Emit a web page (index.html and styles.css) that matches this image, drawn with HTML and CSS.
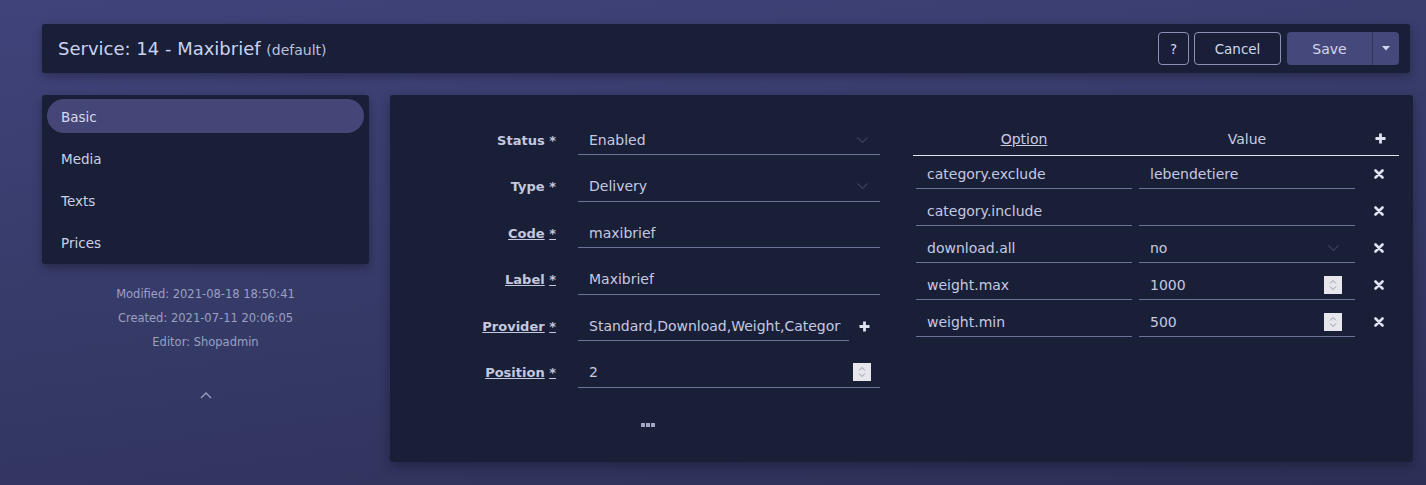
FILE: index.html
```html
<!DOCTYPE html>
<html lang="en">

<head>
    <meta charset="UTF-8">
    <meta name="viewport" content="width=device-width, initial-scale=1.0">
    <title>Service: 14 - Maxibrief</title>
    <link rel="stylesheet" href="styles.css">
</head>

<body>
    <div class="page">
        <!-- Kopfzeile mit Titel und Aktionen -->
        <header class="topbar">
            <h1 class="title">Service: 14 - Maxibrief <small>(default)</small></h1>
            <div class="actions">
                <button class="btn btn-outline btn-help">?</button>
                <button class="btn btn-outline btn-cancel">Cancel</button>
                <div class="btn-group">
                    <button class="btn btn-primary btn-save">Save</button>
                    <button class="btn btn-primary btn-toggle">
                        <svg width="8" height="5" viewBox="0 0 8 5"><path d="M0 0h8L4 4.5z" fill="currentColor"/></svg>
                    </button>
                </div>
            </div>
        </header>

        <div class="content">
            <!-- Navigation links -->
            <aside class="side">
                <nav class="side-nav">
                    <a class="nav-item active">Basic</a>
                    <a class="nav-item">Media</a>
                    <a class="nav-item">Texts</a>
                    <a class="nav-item">Prices</a>
                </nav>
                <div class="meta">
                    <div>Modified: 2021-08-18 18:50:41</div>
                    <div>Created: 2021-07-11 20:06:05</div>
                    <div>Editor: Shopadmin</div>
                </div>
                <div class="collapse-toggle">
                    <svg width="12" height="7" viewBox="0 0 12 7"><path d="M1 6l5-5 5 5" fill="none" stroke="currentColor" stroke-width="1.3"/></svg>
                </div>
            </aside>

            <!-- Formular -->
            <main class="card">
                <div class="form-col">
                    <div class="form-row">
                        <label class="form-label">Status *</label>
                        <div class="field">
                            <input type="text" value="Enabled">
                            <svg class="chevron chevron-status" width="11" height="6" viewBox="0 0 11 6"><path d="M0.5 0.5l5 5 5-5" fill="none" stroke="currentColor" stroke-width="1.2"/></svg>
                        </div>
                    </div>
                    <div class="form-row">
                        <label class="form-label">Type *</label>
                        <div class="field">
                            <input type="text" value="Delivery">
                            <svg class="chevron chevron-status" width="11" height="6" viewBox="0 0 11 6"><path d="M0.5 0.5l5 5 5-5" fill="none" stroke="currentColor" stroke-width="1.2"/></svg>
                        </div>
                    </div>
                    <div class="form-row">
                        <label class="form-label"><span class="u">Code</span> <span class="u">*</span></label>
                        <div class="field">
                            <input type="text" value="maxibrief">
                        </div>
                    </div>
                    <div class="form-row">
                        <label class="form-label"><span class="u">Label</span> <span class="u">*</span></label>
                        <div class="field">
                            <input type="text" value="Maxibrief">
                        </div>
                    </div>
                    <div class="form-row">
                        <label class="form-label"><span class="u">Provider</span> <span class="u">*</span></label>
                        <div class="field-wrap">
                            <div class="field field-short">
                                <input type="text" value="Standard,Download,Weight,Category">
                            </div>
                            <span class="icon-btn">
                                <svg width="11" height="11" viewBox="0 0 11 11"><path d="M5.5 0.5v10M0.5 5.5h10" stroke="currentColor" stroke-width="2.8"/></svg>
                            </span>
                        </div>
                    </div>
                    <div class="form-row">
                        <label class="form-label"><span class="u">Position</span> <span class="u">*</span></label>
                        <div class="field">
                            <input type="text" value="2">
                            <span class="spin spin-pos">
                                <svg width="8" height="12" viewBox="0 0 8 12"><path d="M1 4.5l3-3 3 3M1 7.5l3 3 3-3" fill="none" stroke="currentColor" stroke-width="1"/></svg>
                            </span>
                        </div>
                    </div>
                    <div class="more">
                        <span></span><span></span><span></span>
                    </div>
                </div>

                <!-- Konfiguration -->
                <div class="config-col">
                    <div class="opt-head">
                        <div class="u">Option</div>
                        <div>Value</div>
                        <div class="icon-btn">
                            <svg width="11" height="11" viewBox="0 0 11 11"><path d="M5.5 0.5v10M0.5 5.5h10" stroke="currentColor" stroke-width="2.8"/></svg>
                        </div>
                    </div>
                    <div class="opt-row">
                        <div class="field"><input type="text" value="category.exclude"></div>
                        <div class="field"><input type="text" value="lebendetiere"></div>
                        <div class="icon-btn"><svg width="10" height="10" viewBox="0 0 10 10"><path d="M1.5 1.5l7 7M8.5 1.5l-7 7" stroke="currentColor" stroke-width="2.6" stroke-linecap="round"/></svg></div>
                    </div>
                    <div class="opt-row">
                        <div class="field"><input type="text" value="category.include"></div>
                        <div class="field"><input type="text" value=""></div>
                        <div class="icon-btn"><svg width="10" height="10" viewBox="0 0 10 10"><path d="M1.5 1.5l7 7M8.5 1.5l-7 7" stroke="currentColor" stroke-width="2.6" stroke-linecap="round"/></svg></div>
                    </div>
                    <div class="opt-row">
                        <div class="field"><input type="text" value="download.all"></div>
                        <div class="field">
                            <input type="text" value="no">
                            <svg class="chevron chevron-opt" width="11" height="6" viewBox="0 0 11 6"><path d="M0.5 0.5l5 5 5-5" fill="none" stroke="currentColor" stroke-width="1.2"/></svg>
                        </div>
                        <div class="icon-btn"><svg width="10" height="10" viewBox="0 0 10 10"><path d="M1.5 1.5l7 7M8.5 1.5l-7 7" stroke="currentColor" stroke-width="2.6" stroke-linecap="round"/></svg></div>
                    </div>
                    <div class="opt-row">
                        <div class="field"><input type="text" value="weight.max"></div>
                        <div class="field">
                            <input type="text" value="1000">
                            <span class="spin spin-opt">
                                <svg width="8" height="12" viewBox="0 0 8 12"><path d="M1 4.5l3-3 3 3M1 7.5l3 3 3-3" fill="none" stroke="currentColor" stroke-width="1"/></svg>
                            </span>
                        </div>
                        <div class="icon-btn"><svg width="10" height="10" viewBox="0 0 10 10"><path d="M1.5 1.5l7 7M8.5 1.5l-7 7" stroke="currentColor" stroke-width="2.6" stroke-linecap="round"/></svg></div>
                    </div>
                    <div class="opt-row">
                        <div class="field"><input type="text" value="weight.min"></div>
                        <div class="field">
                            <input type="text" value="500">
                            <span class="spin spin-opt">
                                <svg width="8" height="12" viewBox="0 0 8 12"><path d="M1 4.5l3-3 3 3M1 7.5l3 3 3-3" fill="none" stroke="currentColor" stroke-width="1"/></svg>
                            </span>
                        </div>
                        <div class="icon-btn"><svg width="10" height="10" viewBox="0 0 10 10"><path d="M1.5 1.5l7 7M8.5 1.5l-7 7" stroke="currentColor" stroke-width="2.6" stroke-linecap="round"/></svg></div>
                    </div>
                </div>
            </main>
        </div>
    </div>
</body>

</html>
```

FILE: styles.css
```css
html,
body {
    height: 100%;
}

body {
    margin: 0;
    font-family: "DejaVu Sans", Verdana, sans-serif;
    font-size: 13px;
    color: #c5c9e0;
    background: linear-gradient(172deg, #40437a 0%, #373b69 45%, #2c3057 100%);
    overflow: hidden;
}

.page {
    padding: 24px 13px 0 42px;
}

/* Kopfzeile */
.topbar {
    height: 49px;
    margin-right: 3px;
    display: flex;
    align-items: center;
    justify-content: space-between;
    padding: 0 11px 0 16px;
    background: #1a1f38;
    border-radius: 3px;
    box-shadow: 0 3px 10px rgba(0, 0, 0, 0.3);
}

.title {
    margin: 0;
    font-size: 18px;
    font-weight: normal;
    color: #cbd3f0;
}

.title small {
    font-size: 14px;
    color: #bcc2de;
}

.actions {
    display: flex;
    align-items: center;
}

.btn {
    height: 33px;
    font-family: inherit;
    font-size: 13.5px;
    color: #d3d7ec;
    border-radius: 4px;
    cursor: pointer;
    padding: 0;
}

.btn-outline {
    background: transparent;
    border: 1px solid #8c91b5;
}

.btn-help {
    width: 31px;
}

.btn-cancel {
    width: 87px;
    margin-left: 5px;
}

.btn-group {
    display: flex;
    margin-left: 6px;
}

.btn-primary {
    background: #45487a;
    border: none;
}

.btn-save {
    width: 86px;
    font-size: 14px;
    border-radius: 4px 0 0 4px;
    border-right: 1px solid #32355c;
}

.btn-toggle {
    width: 26px;
    border-radius: 0 4px 4px 0;
    display: flex;
    align-items: center;
    justify-content: center;
}

/* Inhalt */
.content {
    display: flex;
    gap: 21px;
    margin-top: 22px;
}

.side {
    width: 327px;
    flex-shrink: 0;
}

.side-nav {
    background: #1a1f38;
    border-radius: 3px;
    padding: 4px 5px 5px;
    display: flex;
    flex-direction: column;
    gap: 8px;
    box-shadow: 0 4px 10px rgba(0, 0, 0, 0.3);
}

.nav-item {
    height: 34px;
    line-height: 36px;
    padding-left: 14px;
    border-radius: 17px;
    font-size: 13.5px;
    color: #cbcfe5;
}

.nav-item.active {
    background: #434677;
    color: #d6daef;
}

.meta {
    margin-top: 18px;
    text-align: center;
    font-size: 11.5px;
    line-height: 24px;
    color: #9aa0c2;
}

.collapse-toggle {
    margin-top: 33px;
    text-align: center;
    color: #9ca1c3;
}

.card {
    flex: 1;
    height: 367px;
    display: flex;
    gap: 33px;
    padding: 30px 14px 0 0;
    box-sizing: border-box;
    background: #1a1f38;
    border-radius: 3px;
    box-shadow: 0 4px 12px rgba(0, 0, 0, 0.3);
}

/* Formular links */
.form-col {
    width: 490px;
    display: flex;
    flex-direction: column;
    gap: 16.6px;
}

.form-row {
    display: grid;
    grid-template-columns: 188px 302px;
    height: 30px;
    align-items: center;
}

.form-label {
    text-align: right;
    padding-right: 22px;
    font-weight: bold;
    color: #c4c8df;
}

.u {
    text-decoration: underline;
}

.field {
    height: 30px;
    box-sizing: border-box;
    display: flex;
    align-items: center;
    border-bottom: 1px solid #6d729b;
}

.field input {
    flex: 1;
    min-width: 0;
    height: 100%;
    padding: 0 8px 0 11px;
    border: none;
    outline: none;
    background: transparent;
    font-family: inherit;
    font-size: 14px;
    color: #c5c9e0;
}

.field-wrap {
    display: flex;
    align-items: center;
}

.field-short {
    width: 271px;
}

.field-wrap .icon-btn {
    flex: 1;
}

.chevron {
    color: #3a3f58;
    flex-shrink: 0;
}

.chevron-status {
    margin-right: 12px;
}

.chevron-opt {
    margin-right: 16px;
}

.spin {
    width: 18px;
    height: 18px;
    background: #e6e6ec;
    color: #9a9aa8;
    display: flex;
    align-items: center;
    justify-content: center;
    flex-shrink: 0;
}

.spin-pos {
    margin-right: 9px;
}

.spin-opt {
    margin-right: 13px;
}

.icon-btn {
    display: flex;
    align-items: center;
    justify-content: center;
    color: #dfe2f0;
}

.more {
    display: flex;
    gap: 1px;
    margin: 18px 0 0 251px;
}

.more span {
    width: 4px;
    height: 4px;
    background: #a2a7c6;
}

/* Optionen rechts */
.config-col {
    width: 486px;
}

.opt-head {
    display: grid;
    grid-template-columns: 216px 216px 1fr;
    column-gap: 7px;
    padding: 0 0 3px 3px;
    height: 27px;
    align-items: center;
    text-align: center;
    font-size: 14px;
    color: #c7cbe2;
    border-bottom: 1px solid #dfe2ef;
}

.opt-row {
    display: grid;
    grid-template-columns: 216px 216px 1fr;
    column-gap: 7px;
    padding: 3px 0 0 3px;
    margin-bottom: 4px;
    align-items: center;
}

.opt-row .icon-btn {
    padding-right: 3px;
}
```
